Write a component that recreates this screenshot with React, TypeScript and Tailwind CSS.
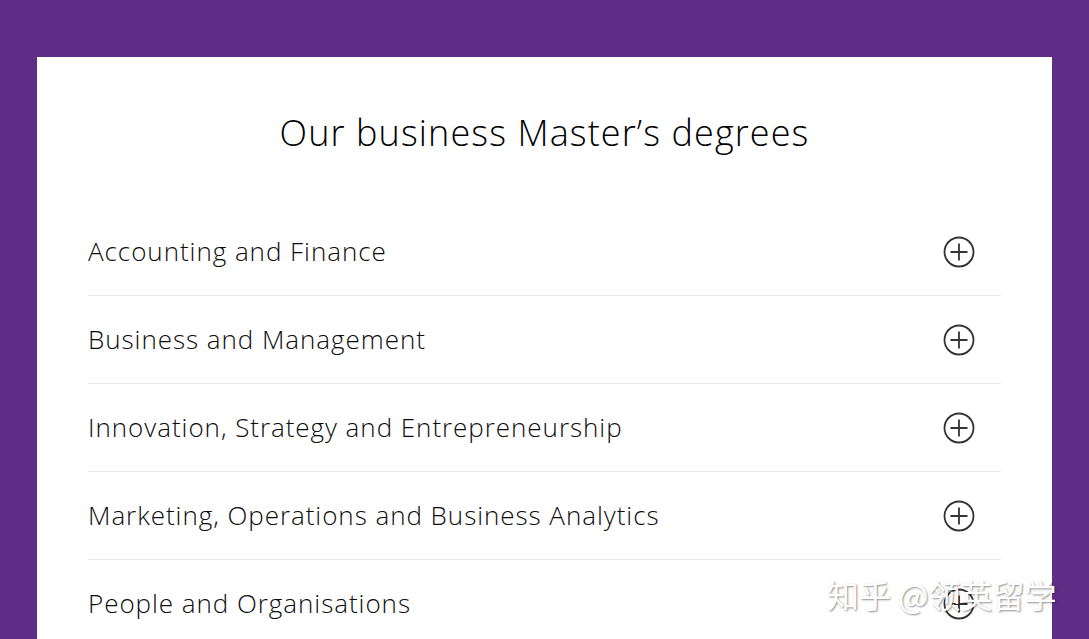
import React from 'react';

const degrees = [
  'Accounting and Finance',
  'Business and Management',
  'Innovation, Strategy and Entrepreneurship',
  'Marketing, Operations and Business Analytics',
  'People and Organisations',
];

const PlusCircle = () => (
  <svg width="32" height="32" viewBox="0 0 32 32" fill="none" className="shrink-0">
    <circle cx="16" cy="16" r="14.5" stroke="#333" strokeWidth="1.8" />
    <path d="M16 7.5v17M7.5 16h17" stroke="#333" strokeWidth="1.8" />
  </svg>
);

const App: React.FC = () => {
  return (
    <div className="relative h-[639px] w-full overflow-hidden bg-[#5e2e86] px-[37px] pt-[57px] font-['Open_Sans',sans-serif]">
      <div className="h-full bg-white px-[51px] pt-[53px]">
        {/* Heading */}
        <h2 className="text-center text-[36px] font-light leading-[46px] tracking-[1.1px] text-black">
          Our business Master’s degrees
        </h2>

        {/* Accordion rows */}
        <div className="mt-[52px]">
          {degrees.map((d) => (
            <div
              key={d}
              className="flex h-[88px] items-center justify-between border-b border-[#e8e8e8] pr-[26px]"
            >
              <span className="text-[26px] font-light tracking-[0.95px] text-[#0d0d0d]">{d}</span>
              <PlusCircle />
            </div>
          ))}
        </div>
      </div>

      {/* Watermark */}
      <div className="absolute left-[827px] top-[574px] font-['Noto_Sans_CJK_SC',sans-serif] text-[32px] leading-[40px] text-white [text-shadow:1px_1px_2px_rgba(0,0,0,0.45)]">
        知乎 @领英留学
      </div>
    </div>
  );
};

export default App;
